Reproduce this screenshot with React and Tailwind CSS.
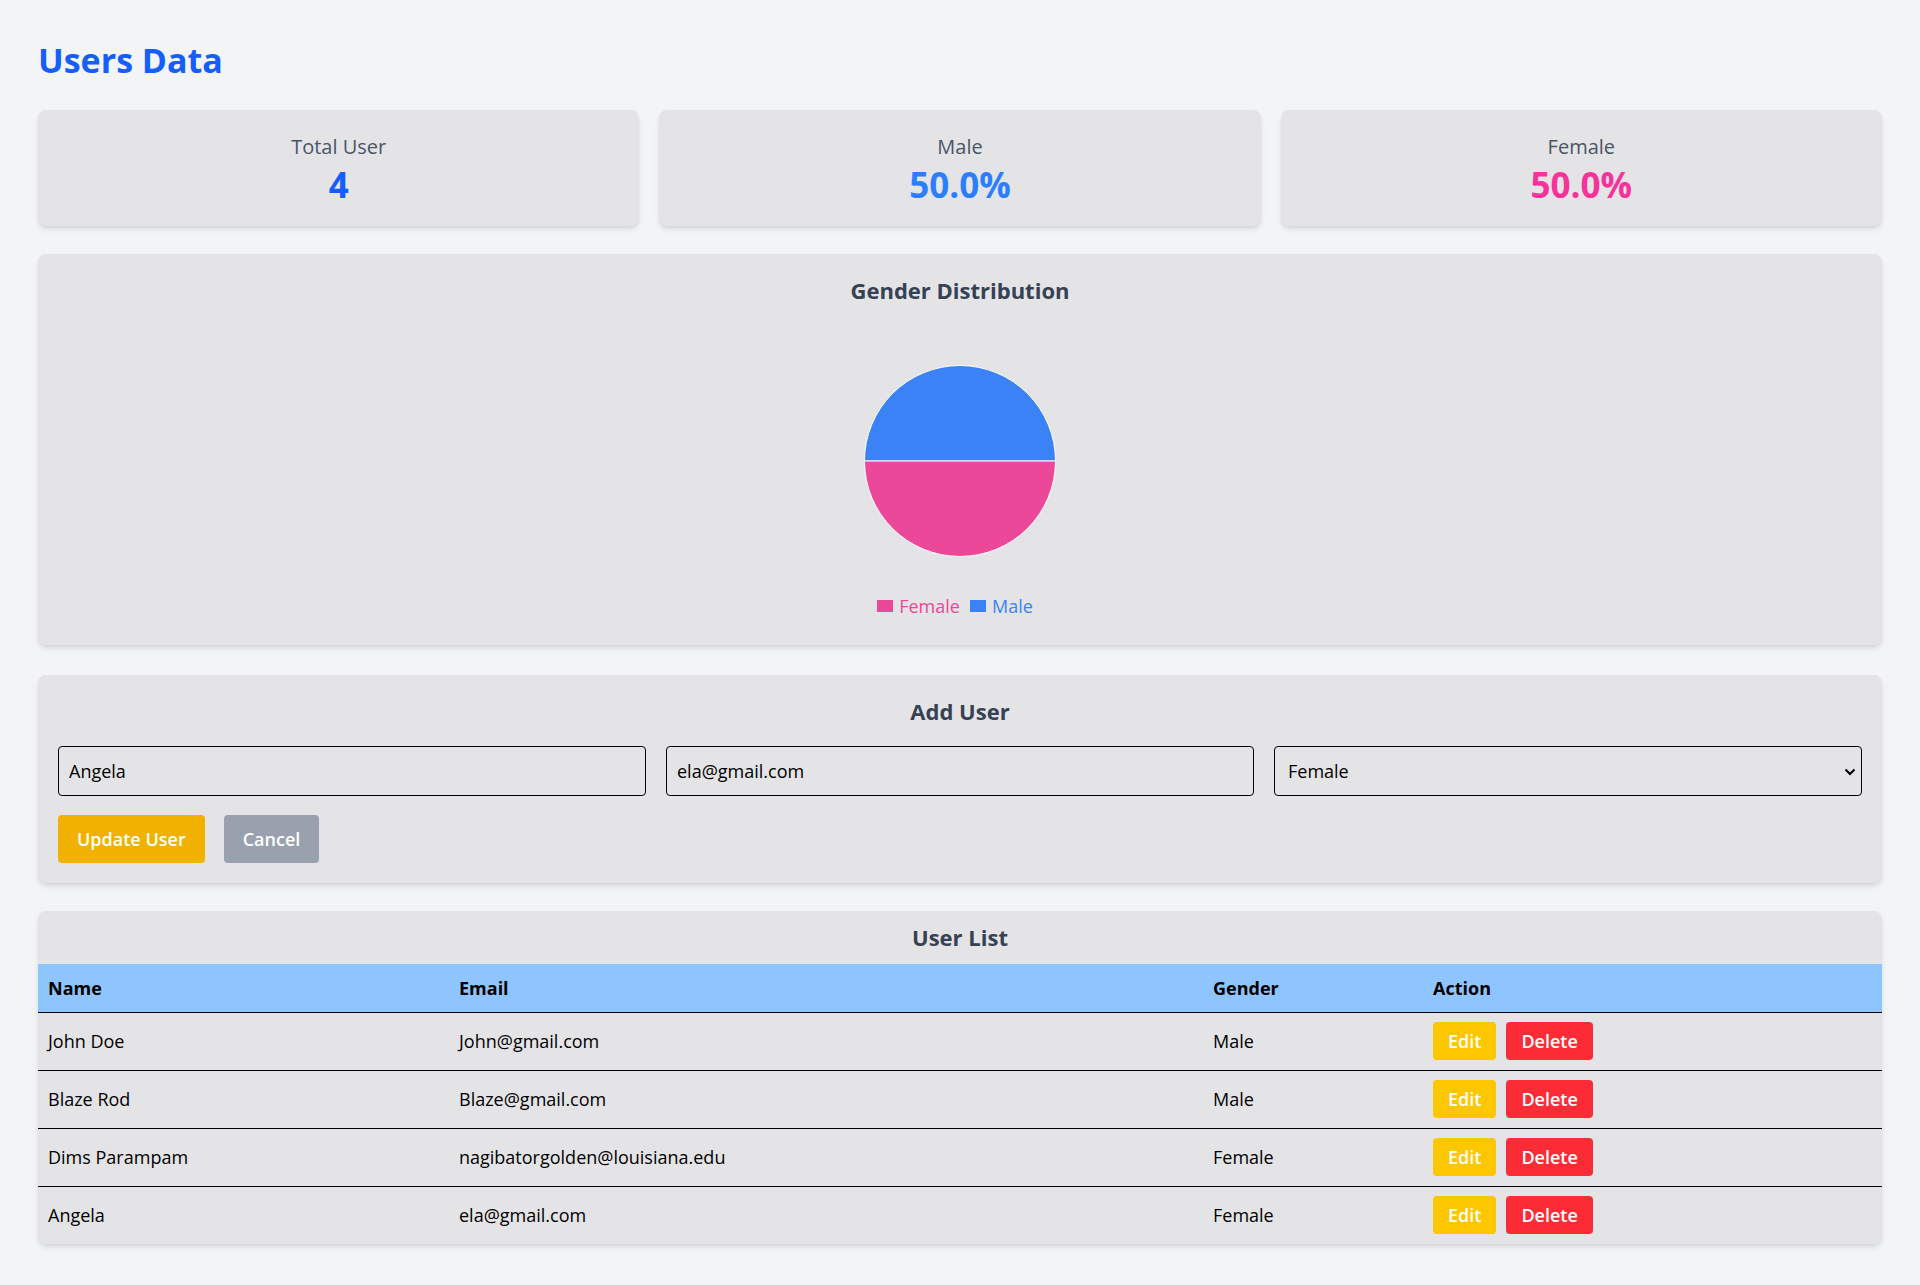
const users = [
    { name: 'John Doe', email: 'John@gmail.com', gender: 'Male' },
    { name: 'Blaze Rod', email: 'Blaze@gmail.com', gender: 'Male' },
    { name: 'Dims Parampam', email: 'nagibatorgolden@louisiana.edu', gender: 'Female' },
    { name: 'Angela', email: 'ela@gmail.com', gender: 'Female' },
];

function StatCard({ label, value, color }) {
    return (
        <div className="h-[116px] rounded-lg bg-zinc-200 pt-[23px] text-center shadow-md">
            <p className="text-xl leading-7 text-gray-600">{label}</p>
            <p className={`mt-[4px] text-[35px] font-bold leading-10 ${color}`}>{value}</p>
        </div>
    );
}

function GenderPie() {
    const cx = 100;
    const cy = 100;
    const r = 95.5;

    return (
        <svg width="200" height="200" viewBox="0 0 200 200">
            <path
                d={`M${cx - r},${cy} A${r},${r} 0 0 1 ${cx + r},${cy} Z`}
                fill="#3b82f6"
                stroke="#fff"
                strokeWidth="1"
            />
            <path
                d={`M${cx + r},${cy} A${r},${r} 0 0 1 ${cx - r},${cy} Z`}
                fill="#ec4899"
                stroke="#fff"
                strokeWidth="1"
            />
        </svg>
    );
}

function LegendItem({ label, fill, text }) {
    return (
        <div className="mr-[10px] flex items-center">
            <span className={`h-3 w-4 ${fill}`} />
            <span className={`ml-[6px] ${text}`}>{label}</span>
        </div>
    );
}

export default function App() {
    return (
        <div className="min-h-screen bg-gray-100 px-[38px] pb-[34px] pt-[38px] font-['Open_Sans',sans-serif]">
            <h1 className="text-[34px] font-bold leading-[44px] text-blue-600">Users Data</h1>

            <div className="mt-7 grid grid-cols-3 gap-5">
                <StatCard label="Total User" value="4" color="text-blue-600" />
                <StatCard label="Male" value="50.0%" color="text-blue-500" />
                <StatCard label="Female" value="50.0%" color="text-pink-500" />
            </div>

            <div className="mt-7 h-[391px] rounded-lg bg-zinc-200 p-5 shadow-md">
                <h2 className="text-center text-[22px] font-bold leading-8 text-gray-700">
                    Gender Distribution
                </h2>
                <div className="mt-[55px] flex justify-center">
                    <GenderPie />
                </div>
                <div className="mt-[33px] flex justify-center text-lg leading-6">
                    <LegendItem label="Female" fill="bg-[#ec4899]" text="text-[#ec4899]" />
                    <LegendItem label="Male" fill="bg-[#3b82f6]" text="text-[#3b82f6]" />
                </div>
            </div>

            <div className="mt-[30px] rounded-lg bg-zinc-200 p-5 shadow-md">
                <h2 className="mb-[19px] text-center text-[22px] font-bold leading-8 text-gray-700">
                    Add User
                </h2>
                <div className="grid grid-cols-3 gap-5">
                    <input
                        className="h-[50px] rounded border border-black bg-transparent px-2.5 text-lg text-black outline-none"
                        defaultValue="Angela"
                    />
                    <input
                        className="h-[50px] rounded border border-black bg-transparent px-2.5 text-lg text-black outline-none"
                        defaultValue="ela@gmail.com"
                    />
                    <div className="relative">
                        <select
                            className="h-[50px] w-full appearance-none rounded border border-black bg-transparent pl-[13px] text-lg text-black outline-none"
                            defaultValue="Female"
                        >
                            <option>Male</option>
                            <option>Female</option>
                        </select>
                        <svg
                            className="pointer-events-none absolute right-[6px] top-[22px]"
                            width="12"
                            height="8"
                            viewBox="0 0 12 8"
                        >
                            <path d="M1.5 1.5 L6 6 L10.5 1.5" fill="none" stroke="#000" strokeWidth="2" />
                        </svg>
                    </div>
                </div>
                <div className="mt-[19px] flex gap-[19px]">
                    <button className="h-12 rounded bg-yellow-500 px-[19px] text-lg font-semibold text-white">
                        Update User
                    </button>
                    <button className="h-12 rounded bg-gray-400 px-[19px] text-lg font-semibold text-white">
                        Cancel
                    </button>
                </div>
            </div>

            <div className="mt-7 overflow-hidden rounded-lg bg-zinc-200 shadow-md">
                <h2 className="flex h-[53px] items-center justify-center text-[22px] font-bold text-gray-700">
                    User List
                </h2>
                <table className="w-full table-fixed border-collapse text-left text-lg text-black">
                    <colgroup>
                        <col className="w-[411px]" />
                        <col className="w-[754px]" />
                        <col className="w-[220px]" />
                        <col />
                    </colgroup>
                    <thead>
                        <tr className="border-b border-black bg-blue-300">
                            <th className="h-12 px-2.5 font-bold">Name</th>
                            <th className="h-12 px-2.5 font-bold">Email</th>
                            <th className="h-12 px-2.5 font-bold">Gender</th>
                            <th className="h-12 px-2.5 font-bold">Action</th>
                        </tr>
                    </thead>
                    <tbody>
                        {users.map((user, i) => (
                            <tr
                                key={user.email}
                                className={i < users.length - 1 ? 'border-b border-black' : ''}
                            >
                                <td className="h-[58px] px-2.5">{user.name}</td>
                                <td className="h-[58px] px-2.5">{user.email}</td>
                                <td className="h-[58px] px-2.5">{user.gender}</td>
                                <td className="h-[58px] px-2.5">
                                    <div className="flex gap-2.5">
                                        <button className="h-[38px] rounded bg-yellow-400 px-[15px] text-lg font-semibold text-white">
                                            Edit
                                        </button>
                                        <button className="h-[38px] rounded bg-red-500 px-[15px] text-lg font-semibold text-white">
                                            Delete
                                        </button>
                                    </div>
                                </td>
                            </tr>
                        ))}
                    </tbody>
                </table>
            </div>
        </div>
    );
}
